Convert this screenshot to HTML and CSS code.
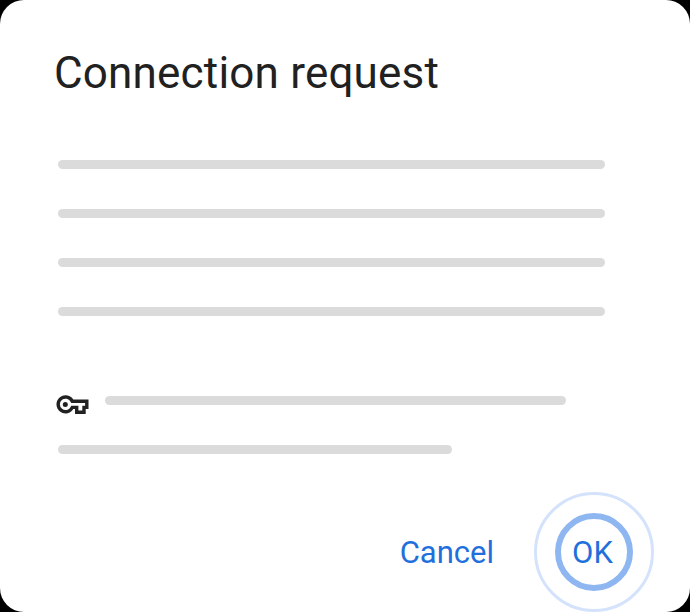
FILE: index.html
```html
<!DOCTYPE html>
<html lang="en">
<head>
<meta charset="utf-8">
<title>Connection request</title>
<link rel="stylesheet" href="styles.css">
</head>
<body>
<main class="dialog">
  <h1 class="title">Connection request</h1>
  <div class="lines">
    <div class="line"></div>
    <div class="line"></div>
    <div class="line"></div>
    <div class="line"></div>
  </div>
  <div class="key-row">
    <svg class="key" viewBox="0 0 33 20">
      <path class="key-outline" d="M16.300 6.300H30.800V12.400H28V17.300H20.700V12.400H16.300A7.400 7.400 0 1 1 16.300 6.300Z"/>
      <circle cx="9.300" cy="9.400" r="2.500"/>
    </svg>
    <div class="line key-line"></div>
  </div>
  <div class="line last-line"></div>
  <div class="actions">
    <button class="button">Cancel</button>
    <button class="button ok">OK</button>
  </div>
</main>
</body>
</html>
```

FILE: styles.css
```css
* { box-sizing: border-box; }
body { margin: 0; background: #000; font-family: Roboto, sans-serif; }
.dialog { width: 690px; height: 612px; padding: 47px 36px 0 58px; border-radius: 24px; background: #fff; overflow: hidden; }
.title { margin: 0 0 0 -4px; height: 113px; font-size: 44px; line-height: 52px; font-weight: 400; letter-spacing: .19px; color: #212121; white-space: nowrap; }
.lines { display: grid; gap: 40px; }
.line { width: 547px; height: 9px; border-radius: 5px; background: #dbdbdb; }
.key-row { display: flex; gap: 15.5px; height: 49px; margin-top: 80px; }
.key { width: 33px; height: 20px; margin: -1px 0 0 -2px; fill: #212121; }
.key-outline { fill: none; stroke: #212121; stroke-width: 3.4; }
.key-line { width: 461px; }
.last-line { width: 394px; }
.actions { display: flex; justify-content: flex-end; align-items: center; gap: 40px; margin-top: 38px; }
.button { padding: 1px 0 0; border: 0; background: none; font: 400 31px/38px Roboto, sans-serif; color: #1f70dc; }
.ok { width: 120px; height: 120px; padding: 2px 3px 0 0; border: 3px solid #d4e3fb; border-radius: 50%; position: relative; }
.ok::after { content: ""; position: absolute; inset: 18px; border: 6px solid #8eb6f1; border-radius: 50%; }
```
